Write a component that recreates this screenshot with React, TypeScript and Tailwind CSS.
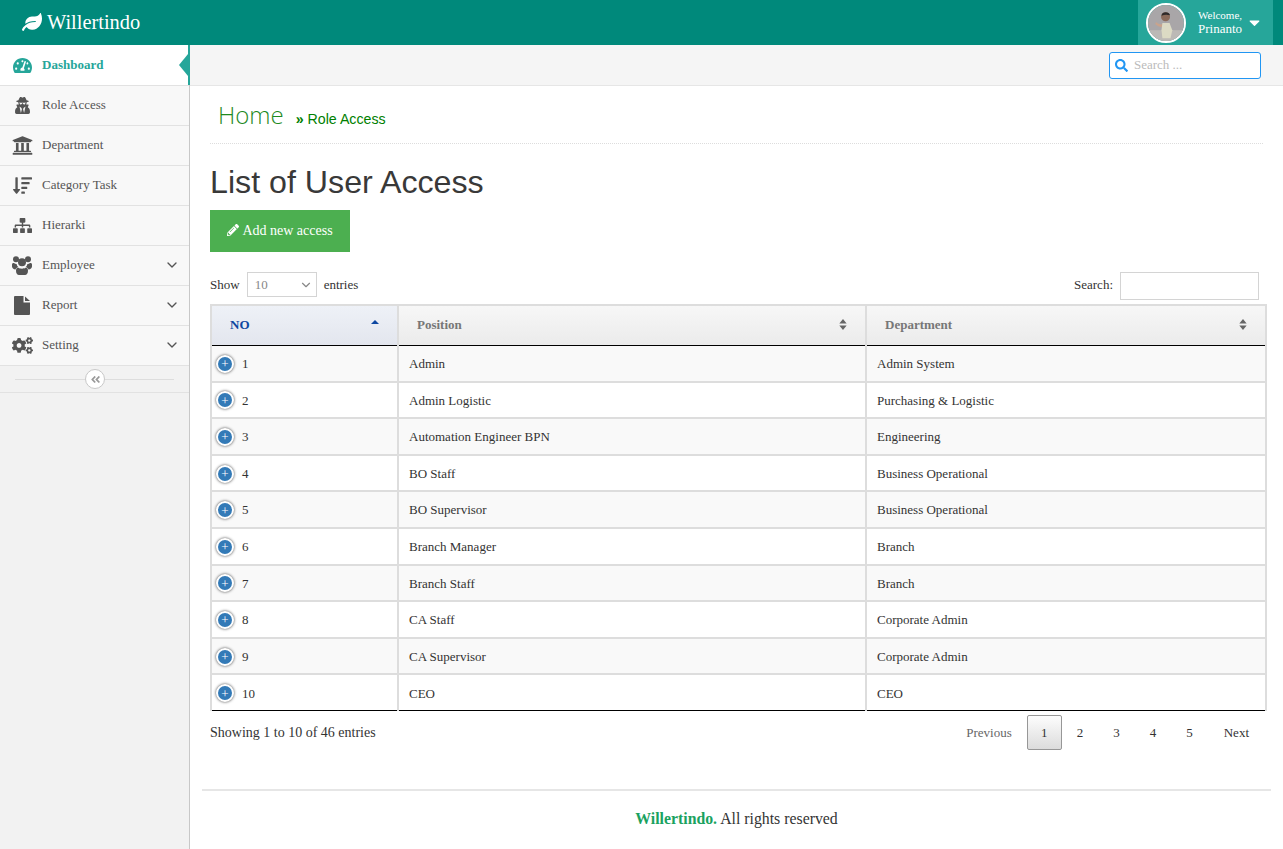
import { FaAngleDoubleLeft, FaCaretDown, FaCogs, FaLeaf, FaPencilAlt, FaSearch, FaSitemap, FaSortAmountDown, FaTachometerAlt, FaUniversity, FaUserSecret } from "react-icons/fa";
import { FiChevronDown } from "react-icons/fi";

function UsersIcon() {
  return (
    <svg viewBox="0 0 20 19" className="h-[19px] w-[20px] fill-current">
      <circle cx="4" cy="3.2" r="3" />
      <circle cx="16" cy="3.2" r="3" />
      <circle cx="10" cy="6.2" r="4" />
      <path d="M0 8.5C0 7.2 1 7 2 7c1 .8 1.6 1 2.6.9.2 1.2.8 2.2 1.6 3C4.600 11.500 3.800 12.500 3.500 13.500 1.500 13.500 0 12 0 10.500z" />
      <path d="M20 8.500C20 7.200 19 7 18 7c-1 .8-1.600 1-2.600.900-.2 1.200-.8 2.200-1.600 3 1.600.6 2.400 1.600 2.700 2.600 2 0 3.500-1.500 3.500-3z" />
      <path d="M6 11.500c1 .8 2.500 1.200 4 1.200s3-.4 4-1.200c1.200.4 2 1.500 2 3.200 0 2.300-1.200 4.300-3 4.300H7c-1.800 0-3-2-3-4.300 0-1.700.8-2.800 2-3.200z" />
    </svg>
  );
}

function FileIcon() {
  return (
    <svg viewBox="0 0 16 19" className="h-[19px] w-[16px] fill-current">
      <path d="M1 0h8.500v6.500H16V18a1 1 0 0 1-1 1H1a1 1 0 0 1-1-1V1a1 1 0 0 1 1-1z" />
      <path d="M11 0.500L16 5h-5z" />
    </svg>
  );
}

const menu = [
  { name: "Dashboard", icon: <FaTachometerAlt className="text-[19px]" />, active: true },
  { name: "Role Access", icon: <FaUserSecret className="text-[17px]" /> },
  { name: "Department", icon: <FaUniversity className="text-[21px]" /> },
  { name: "Category Task", icon: <FaSortAmountDown className="text-[19px]" /> },
  { name: "Hierarki", icon: <FaSitemap className="text-[19px]" /> },
  { name: "Employee", icon: <UsersIcon />, sub: true },
  { name: "Report", icon: <FileIcon />, sub: true },
  { name: "Setting", icon: <FaCogs className="text-[21px]" />, sub: true },
];

const rows = [
  ["Admin", "Admin System"],
  ["Admin Logistic", "Purchasing & Logistic"],
  ["Automation Engineer BPN", "Engineering"],
  ["BO Staff", "Business Operational"],
  ["BO Supervisor", "Business Operational"],
  ["Branch Manager", "Branch"],
  ["Branch Staff", "Branch"],
  ["CA Staff", "Corporate Admin"],
  ["CA Supervisor", "Corporate Admin"],
  ["CEO", "CEO"],
];

function Avatar() {
  return (
    <svg viewBox="0 0 40 40" className="h-10 w-10 rounded-full border-2 border-white">
      <rect width="40" height="40" fill="#a9a6a8" />
      <rect y="28" width="40" height="12" fill="#bcb9b6" />
      <path d="M16 21c-3 1-5 0-7-2l-1 2c3 3 6 4 9 3z" fill="#c9a38c" />
      <path d="M16 20h8l3 8-2 9h-9l-1-9z" fill="#dcdac4" />
      <circle cx="19.500" cy="13" r="5" fill="#8a6a5a" />
      <path d="M15 12c0-5 9-5 9.500-.5-3-1-6.500-1-9.500.5z" fill="#2e2a2a" />
    </svg>
  );
}

function SortIcon() {
  return (
    <svg viewBox="0 0 8 12" className="h-[11px] w-[8px] fill-[#666]">
      <path d="M4 0l4 5H0zM4 12L0 7h8z" />
    </svg>
  );
}

export default function App() {
  return (
    <div className="flex h-[849px] flex-col overflow-hidden bg-white font-['Liberation_Serif',serif] text-[13px] text-[#333]">
      <header className="flex h-[45px] shrink-0 items-center justify-between bg-[#00897b] pr-[10px] text-white">
        <div className="flex items-center gap-[5px] pl-[22px] text-[20.4px]">
          <FaLeaf className="text-[20px]" />
          <span>Willertindo</span>
        </div>
        <div className="flex h-[45px] w-[135px] items-center bg-[#26a69a] pl-[8px]">
          <Avatar />
          <div className="ml-[12px] pb-[2px] leading-[14px]">
            <div className="text-[11px]">Welcome,</div>
            <div className="text-[13px]">Prinanto</div>
          </div>
          <FaCaretDown className="ml-[4px] text-[17px]" />
        </div>
      </header>

      <div className="flex min-h-0 flex-1">
        <aside className="w-[190px] shrink-0 border-r border-r-[#c8c8c8] bg-[#f2f2f2]">
          {menu.map((m) => (
            <div
              key={m.name}
              className={`relative flex items-center border-b border-b-[#e2e2e2] ${m.active ? "h-[41px] bg-white font-bold text-[#26a69a]" : "h-[40px] bg-[#f8f8f8] pb-[1px] text-[#555]"}`}
            >
              <div className="flex w-[42px] justify-center pl-[2px]">{m.icon}</div>
              <span>{m.name}</span>
              {m.sub ? <FiChevronDown className="absolute right-[9px] text-[16px] text-[#555]" /> : null}
              {m.active ? (
                <div className="absolute right-[-1px] top-0 flex h-[40px] w-[11px] items-center justify-end border-r-[2px] border-r-[#26a69a]">
                  <div className="h-0 w-0 border-y-[11px] border-r-[9px] border-y-transparent border-r-[#26a69a]" />
                </div>
              ) : null}
            </div>
          ))}
          <div className="relative flex h-[27px] items-center justify-center border-b border-b-[#e2e2e2] bg-[#f2f2f2]">
            <div className="h-px w-[159px] bg-[#dddddd]" />
            <div className="absolute left-[85px] flex h-[20px] w-[20px] items-center justify-center rounded-full border border-[#c8c8c8] bg-white text-[#999]">
              <FaAngleDoubleLeft className="text-[11px]" />
            </div>
          </div>
        </aside>

        <main className="min-w-0 flex-1">
          <div className="flex h-[41px] items-center justify-end border-b border-b-[#e6e6e6] bg-[#f5f5f5] pr-[22px]">
            <div className="flex h-[27px] w-[152px] items-center rounded-[3px] border border-[#2196f3] bg-white pl-[5px]">
              <FaSearch className="text-[13px] text-[#2196f3]" />
              <span className="ml-[6px] text-[13px] text-[#bbbbbb]">Search ...</span>
            </div>
          </div>

          <div className="pl-[20px] pr-[17px]">
            <div className="mr-[3px] flex h-[58px] items-end border-b border-dotted border-b-[#dddddd] pb-[12px] pl-[8px] font-['Liberation_Sans',sans-serif]">
              <span className="font-['Open_Sans',sans-serif] text-[24px] font-light leading-[32px] text-[#1f8a1f]">Home</span>
              <span className="ml-[12px] text-[14.2px] leading-[23px] text-[#008000]"><span className="font-bold">»</span> Role Access</span>
            </div>
            <h2 className="mt-[19px] font-['Liberation_Sans',sans-serif] text-[32.2px] leading-[38px] text-[#393939]">List of User Access</h2>
            <button className="mt-[9px] flex h-[42px] w-[140px] items-center justify-center gap-[3px] bg-[#4caf50] pb-[2px] text-[14px] text-white">
              <FaPencilAlt className="text-[12px]" />
              Add new access
            </button>

            <div className="mt-[20px] flex items-start justify-between pr-[7px] leading-[25px]">
              <div className="flex items-center">
                <span>Show</span>
                <div className="relative ml-[7px] flex h-[25px] w-[70px] items-center border border-[#d4d4d4] pl-[7px] text-[#888]">
                  10
                  <FiChevronDown className="absolute right-[3px] text-[14px] text-[#888]" />
                </div>
                <span className="ml-[7px]">entries</span>
              </div>
              <div className="flex items-start">
                <span>Search:</span>
                <div className="ml-[7px] h-[28px] w-[139px] border border-[#d4d4d4]" />
              </div>
            </div>

            <table className="mt-[4px] w-[1057px] table-fixed border-collapse">
              <colgroup>
                <col className="w-[187px]" />
                <col className="w-[468px]" />
                <col />
              </colgroup>
              <thead>
                <tr className="h-[40px] border-b border-b-black font-bold text-[#777]">
                  <th className="relative border-2 border-b-0 border-[#dddddd] bg-gradient-to-b from-[#eef1f7] to-[#e3e6ee] pb-[2px] pl-[18px] text-left text-[#0d47a1]">
                    NO
                    <div className="absolute right-[18px] top-[14px] h-0 w-0 border-x-[4px] border-b-[4px] border-x-transparent border-b-[#0d47a1]" />
                  </th>
                  <th className="border-2 border-b-0 border-[#dddddd] bg-gradient-to-b from-[#f7f7f7] to-[#ebebeb] px-[18px] pb-[2px] text-left">
                    <div className="flex items-center justify-between">Position<SortIcon /></div>
                  </th>
                  <th className="border-2 border-b-0 border-[#dddddd] bg-gradient-to-b from-[#f7f7f7] to-[#ebebeb] px-[18px] pb-[2px] text-left">
                    <div className="flex items-center justify-between">Department<SortIcon /></div>
                  </th>
                </tr>
              </thead>
              <tbody>
                {rows.map((r, i) => (
                  <tr key={r[0]} className={`h-[36.6px] ${i % 2 ? "bg-white" : "bg-[#f9f9f9]"} ${i === 9 ? "border-b border-b-black" : ""}`}>
                    <td className={`border-x-2 border-[#dddddd] pl-[4px] pt-[1px] ${i < 9 ? "border-b-2" : ""}`}>
                      <div className="flex items-center">
                        <div className="flex h-[18px] w-[18px] items-center justify-center rounded-full border-2 border-white bg-[#337ab7] text-[13px] leading-none text-white shadow-[0_0_3px_#444]">+</div>
                        <span className="ml-[8px]">{i + 1}</span>
                      </div>
                    </td>
                    <td className={`border-x-2 border-[#dddddd] pl-[10px] pt-[1px] ${i < 9 ? "border-b-2" : ""}`}>{r[0]}</td>
                    <td className={`border-x-2 border-[#dddddd] pl-[10px] pt-[1px] ${i < 9 ? "border-b-2" : ""}`}>{r[1]}</td>
                  </tr>
                ))}
              </tbody>
            </table>

            <div className="mt-[4px] flex items-center justify-between pr-[5px] text-[14px]">
              <span>Showing 1 to 10 of 46 entries</span>
              <div className="flex items-center text-[13px]">
                <span className="mr-[15px] text-[#666]">Previous</span>
                <span className="flex h-[35px] w-[35px] items-center justify-center rounded-[2px] border border-[#979797] bg-gradient-to-b from-[#fdfdfd] to-[#dcdcdc]">1</span>
                {[2, 3, 4, 5].map((n) => (
                  <span key={n} className="flex h-[35px] w-[36.5px] items-center justify-center">{n}</span>
                ))}
                <span className="ml-[16px] mr-[12px]">Next</span>
              </div>
            </div>
          </div>

          <footer className="ml-[12px] mr-[12px] mt-[39px] border-t-2 border-t-[#e6e6e6] pt-[16px] text-center text-[15.8px]">
            <span className="font-bold text-[#1aa260]">Willertindo.</span> All rights reserved
          </footer>
        </main>
      </div>
    </div>
  );
}
